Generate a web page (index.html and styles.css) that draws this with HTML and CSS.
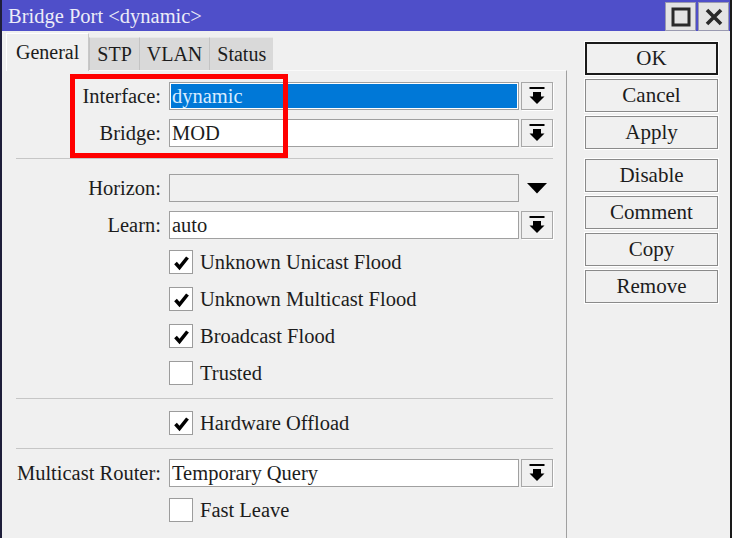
FILE: index.html
```html
<!DOCTYPE html>
<html>

<head>
    <title>Bridge Port</title>
    <link rel="stylesheet" href="styles.css">
</head>

<body>

    <div class="window">
        <div class="titlebar">
            <span class="title">Bridge Port &lt;dynamic&gt;</span>
            <div class="title-btns">
                <span class="tbtn">
                    <svg width="22" height="22" viewBox="0 0 22 22"><rect x="3" y="3" width="16" height="16" fill="none" stroke="#2a2a2a" stroke-width="3"/></svg>
                </span>
                <span class="tbtn">
                    <svg width="22" height="22" viewBox="0 0 22 22"><path d="M4 4 L18 18 M18 4 L4 18" stroke="#2a2a2a" stroke-width="3.6"/></svg>
                </span>
            </div>
        </div>

        <div class="content">
            <div class="main">
                <div class="tabs">
                    <div class="tab active">General</div>
                    <div class="tab">STP</div>
                    <div class="tab">VLAN</div>
                    <div class="tab">Status</div>
                </div>

                <div class="panel">
                    <div class="row">
                        <label class="lbl">Interface:</label>
                        <div class="field selected">dynamic</div>
                        <span class="drop">
                            <svg width="16" height="18" viewBox="0 0 16 18"><rect x="0.5" y="0" width="15" height="2" fill="#000"/><rect x="4" y="5" width="8" height="5" fill="#000"/><polygon points="0.5,9.5 15.5,9.5 8,17" fill="#000"/></svg>
                        </span>
                    </div>
                    <div class="row">
                        <label class="lbl">Bridge:</label>
                        <div class="field">MOD</div>
                        <span class="drop">
                            <svg width="16" height="18" viewBox="0 0 16 18"><rect x="0.5" y="0" width="15" height="2" fill="#000"/><rect x="4" y="5" width="8" height="5" fill="#000"/><polygon points="0.5,9.5 15.5,9.5 8,17" fill="#000"/></svg>
                        </span>
                    </div>

                    <div class="sep first"></div>

                    <div class="row">
                        <label class="lbl">Horizon:</label>
                        <div class="field disabled"></div>
                        <span class="drop plain">
                            <svg width="20" height="11" viewBox="0 0 20 11"><polygon points="0,0 20,0 10,10.5" fill="#000"/></svg>
                        </span>
                    </div>
                    <div class="row">
                        <label class="lbl">Learn:</label>
                        <div class="field">auto</div>
                        <span class="drop">
                            <svg width="16" height="18" viewBox="0 0 16 18"><rect x="0.5" y="0" width="15" height="2" fill="#000"/><rect x="4" y="5" width="8" height="5" fill="#000"/><polygon points="0.5,9.5 15.5,9.5 8,17" fill="#000"/></svg>
                        </span>
                    </div>

                    <div class="row check">
                        <span class="box"><svg width="21" height="21" viewBox="0 0 21 21"><polyline points="4.5,11 8.5,15.5 16.5,5.5" fill="none" stroke="#000" stroke-width="3.6"/></svg></span>
                        <span class="cb-text">Unknown Unicast Flood</span>
                    </div>
                    <div class="row check">
                        <span class="box"><svg width="21" height="21" viewBox="0 0 21 21"><polyline points="4.5,11 8.5,15.5 16.5,5.5" fill="none" stroke="#000" stroke-width="3.6"/></svg></span>
                        <span class="cb-text">Unknown Multicast Flood</span>
                    </div>
                    <div class="row check">
                        <span class="box"><svg width="21" height="21" viewBox="0 0 21 21"><polyline points="4.5,11 8.5,15.5 16.5,5.5" fill="none" stroke="#000" stroke-width="3.6"/></svg></span>
                        <span class="cb-text">Broadcast Flood</span>
                    </div>
                    <div class="row check">
                        <span class="box"></span>
                        <span class="cb-text">Trusted</span>
                    </div>

                    <div class="sep"></div>

                    <div class="row check">
                        <span class="box"><svg width="21" height="21" viewBox="0 0 21 21"><polyline points="4.5,11 8.5,15.5 16.5,5.5" fill="none" stroke="#000" stroke-width="3.6"/></svg></span>
                        <span class="cb-text">Hardware Offload</span>
                    </div>

                    <div class="sep"></div>

                    <div class="row">
                        <label class="lbl">Multicast Router:</label>
                        <div class="field">Temporary Query</div>
                        <span class="drop">
                            <svg width="16" height="18" viewBox="0 0 16 18"><rect x="0.5" y="0" width="15" height="2" fill="#000"/><rect x="4" y="5" width="8" height="5" fill="#000"/><polygon points="0.5,9.5 15.5,9.5 8,17" fill="#000"/></svg>
                        </span>
                    </div>
                    <div class="row check">
                        <span class="box"></span>
                        <span class="cb-text">Fast Leave</span>
                    </div>
                </div>
            </div>

            <div class="side">
                <button class="btn default">OK</button>
                <button class="btn">Cancel</button>
                <button class="btn group-end">Apply</button>
                <button class="btn">Disable</button>
                <button class="btn">Comment</button>
                <button class="btn">Copy</button>
                <button class="btn">Remove</button>
            </div>
        </div>

        <div class="highlight"></div>
    </div>

</body>

</html>
```

FILE: styles.css
```css
body {
    margin: 0;
    background-color: #ffffff;
    font-family: "Liberation Serif", "Times New Roman", serif;
    font-size: 20.5px;
    color: #1c1c1c;
    overflow: hidden;
}

.window {
    position: relative;
    width: 728px;
    height: 538px;
    background-color: #f0f0f0;
    border-left: 2px solid #1e1e3a;
    border-right: 2px solid #1a1a1a;
}

.titlebar {
    height: 31px;
    background-color: #4f4fc9;
    display: flex;
    align-items: center;
    justify-content: space-between;
}

.title {
    color: #ececf8;
    font-size: 20.5px;
    margin-left: 6px;
    margin-top: 2px;
}

.title-btns {
    display: flex;
    gap: 2px;
    margin-right: 1px;
    align-self: flex-start;
    margin-top: 2px;
}

.tbtn {
    width: 29px;
    height: 27px;
    background-color: #e4e4e4;
    border: 1px solid #9a9ab0;
    display: flex;
    align-items: center;
    justify-content: center;
}

.content {
    display: flex;
}

.main {
    margin-left: 4px;
    width: 561px;
}

.tabs {
    display: flex;
    align-items: flex-end;
    margin-top: 2px;
}

.tab {
    height: 32px;
    line-height: 32px;
    padding: 0 7px;
    background-color: #d9d9d9;
    border-left: 1px solid #c4c4c4;
    border-top: 1px solid #e8e8e8;
    font-size: 20px;
}

.tab.active {
    height: 37px;
    line-height: 36px;
    padding: 0 9px;
    background-color: #f0f0f0;
    border-left: 1px solid #ffffff;
    border-top: 1px solid #ffffff;
    border-right: 1px solid #c8c8c8;
    margin-bottom: -1px;
    position: relative;
}

.panel {
    display: flex;
    flex-direction: column;
    border-top: 1px solid #fafafa;
    border-right: 1px solid #a0a0a0;
    padding-top: 11px;
    height: 480px;
}

.row {
    display: flex;
    align-items: center;
    height: 28px;
    margin-bottom: 9px;
    flex-shrink: 0;
}

.lbl {
    width: 155px;
    margin-right: 8px;
    text-align: right;
    white-space: nowrap;
}

.field {
    width: 346px;
    height: 26px;
    line-height: 26px;
    padding-left: 2px;
    background-color: #ffffff;
    border: 1px solid #a0a0a0;
}

.field.selected {
    background-color: #0078d7;
    color: #d8ecff;
    box-shadow: inset 0 0 0 1px #ffffff;
}

.field.disabled {
    background-color: #f0f0f0;
}

.drop {
    width: 30px;
    height: 26px;
    margin-left: 2px;
    border: 1px solid #a8a8a8;
    box-shadow: 1px 1px 0 #ffffff;
    display: flex;
    align-items: center;
    justify-content: center;
}

.drop.plain {
    border-color: transparent;
    box-shadow: none;
}

.check .box {
    margin-left: 163px;
    width: 22px;
    height: 22px;
    background-color: #ffffff;
    border: 1px solid #9c9c9c;
    display: flex;
    align-items: center;
    justify-content: center;
}

.cb-text {
    margin-left: 7px;
}

.sep {
    margin: 2px 0 10px 10px;
    width: 537px;
    border-top: 1px solid #c6c6c6;
}

.sep.first {
    margin-bottom: 15px;
}

.side {
    display: flex;
    flex-direction: column;
    margin-left: 18px;
    margin-top: 11px;
}

.btn {
    width: 133px;
    height: 33px;
    margin-bottom: 4px;
    padding: 0;
    background-color: #f0f0f0;
    border: 1px solid #8a8a8a;
    box-shadow: 0 0 0 1px #ffffff;
    font-family: "Liberation Serif", "Times New Roman", serif;
    font-size: 21px;
    color: #1c1c1c;
}

.btn.default {
    border: 2px solid #1a1a1a;
}

.btn.group-end {
    margin-bottom: 10px;
}

.highlight {
    position: absolute;
    left: 68px;
    top: 74px;
    width: 208px;
    height: 74px;
    border: 5px solid #ff0000;
}
```
